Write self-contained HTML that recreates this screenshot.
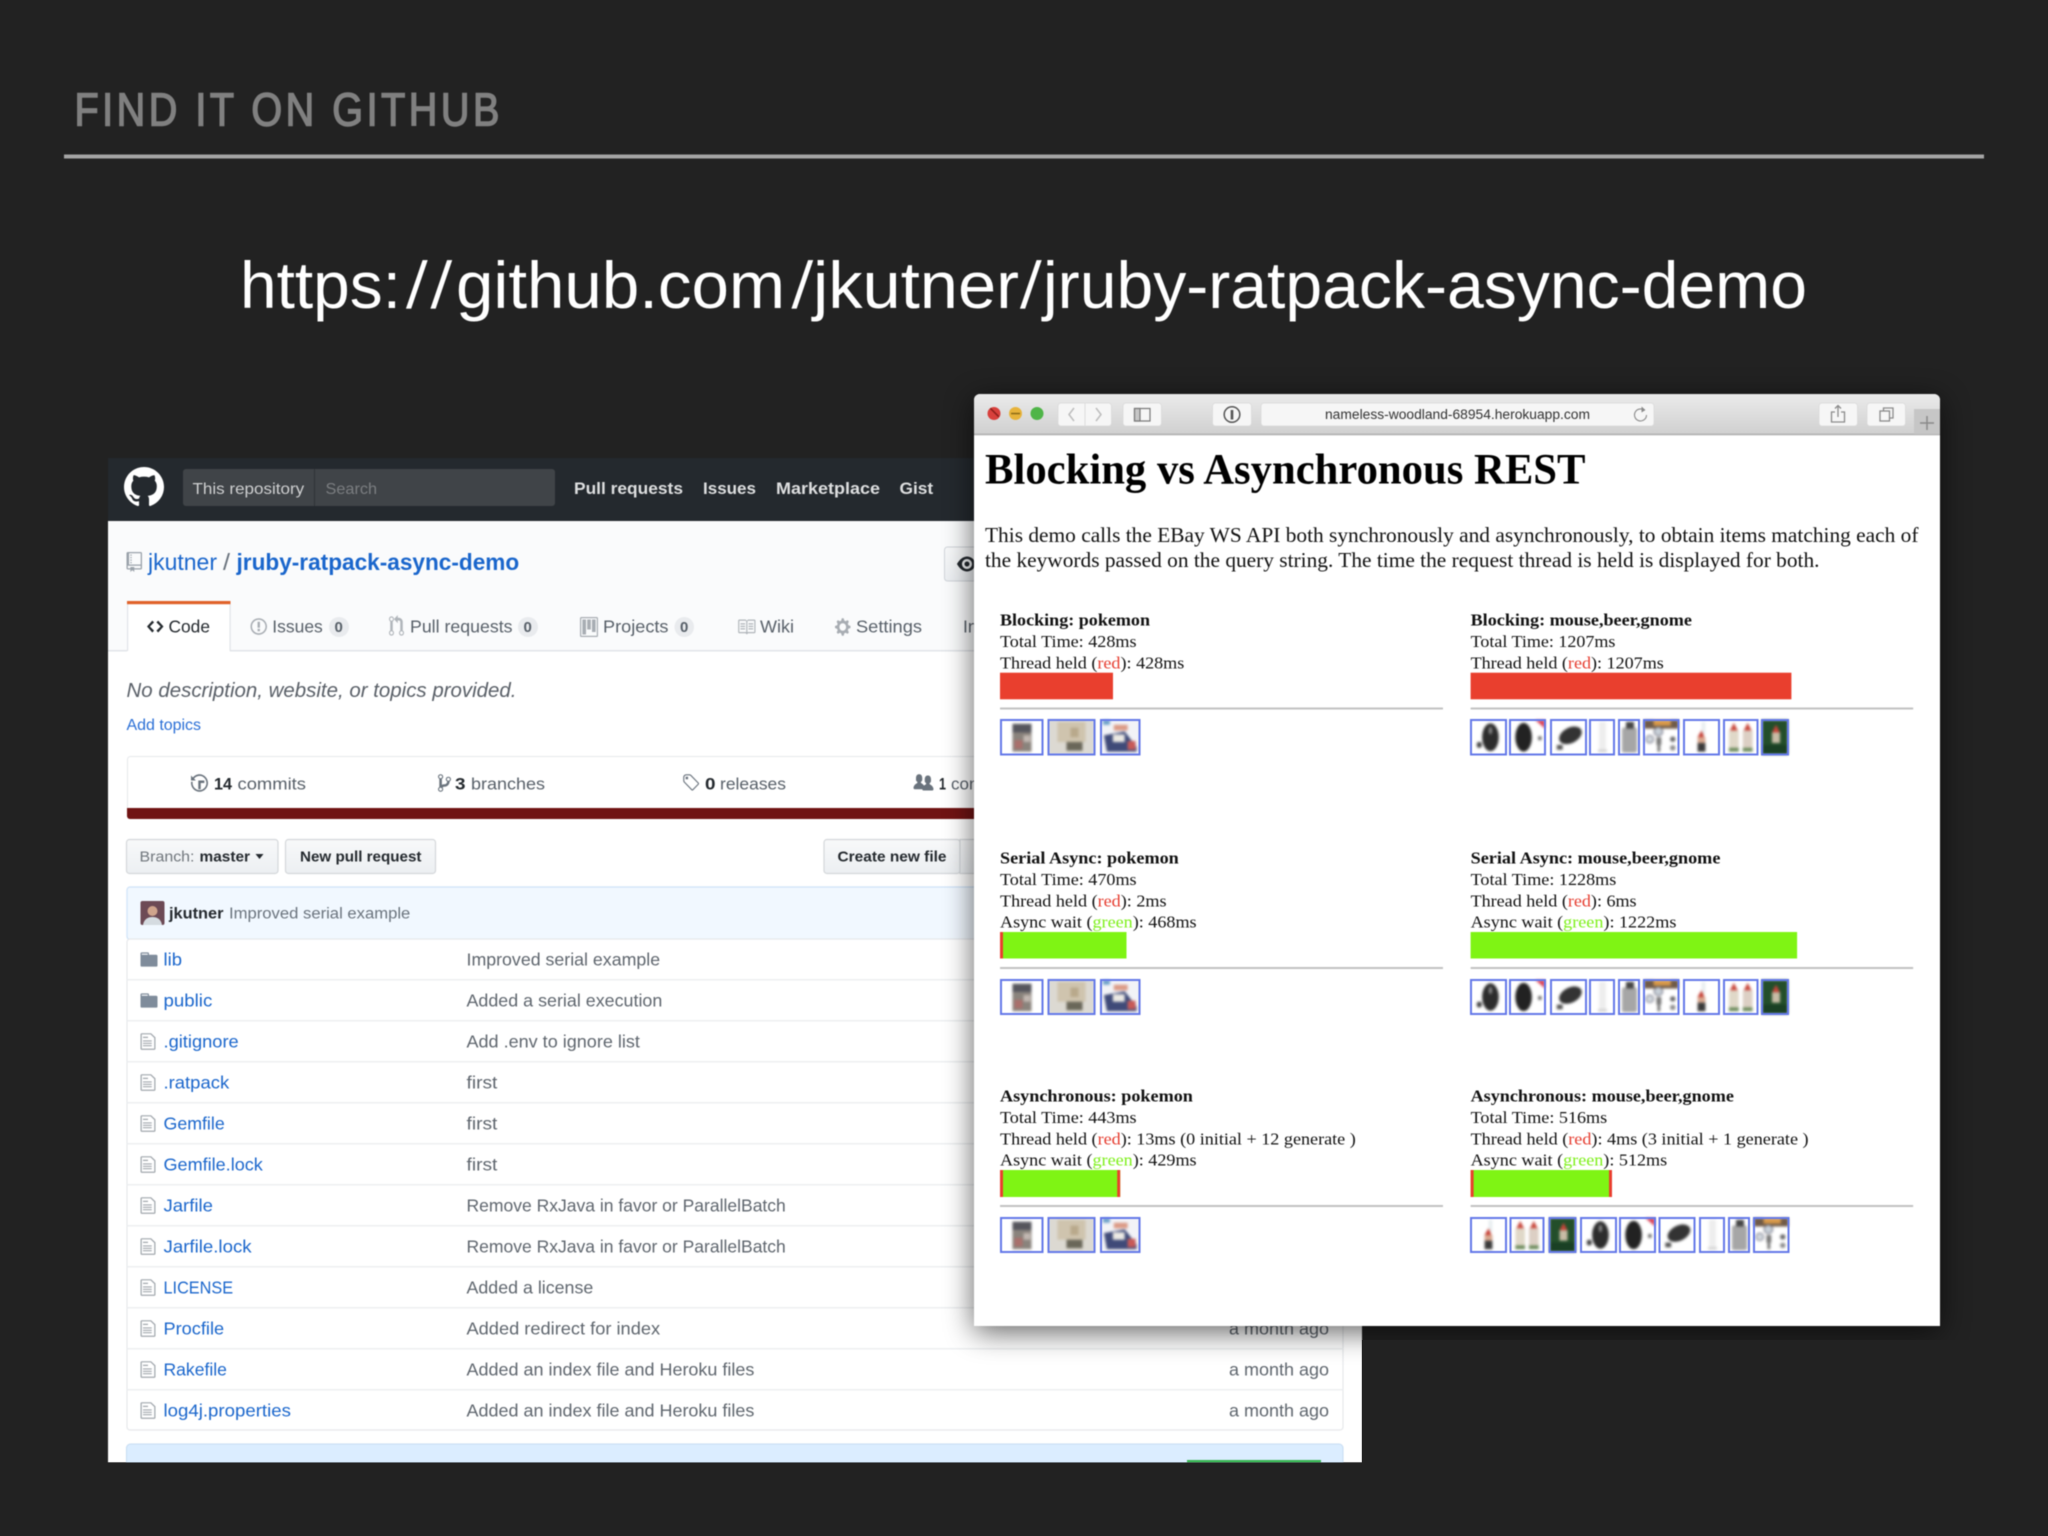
<!DOCTYPE html>
<html lang="en">
<head>
<meta charset="utf-8">
<title>Find it on GitHub</title>
<style>
html,body{margin:0;padding:0;background:#222;width:2048px;height:1536px;overflow:hidden}
svg{display:block}
.s{font-family:"Liberation Sans",sans-serif}
.t{font-family:"Liberation Serif",serif}
.lnk{fill:#1a66cc;font-size:17.5px}
.msg{fill:#5f666e;font-size:17.5px}
.tab{fill:#586069;font-size:17.5px}
.p{fill:#111;font-size:17px}
.b{font-weight:bold;fill:#111;font-size:17px}
</style>
</head>
<body>
<svg xmlns="http://www.w3.org/2000/svg" width="2048" height="1536" viewBox="0 0 2048 1536">
<defs>
<filter id="bl" filterUnits="userSpaceOnUse" x="0" y="0" width="2048" height="1536" color-interpolation-filters="sRGB"><feGaussianBlur stdDeviation="0.65"/></filter>
<filter id="bl2" filterUnits="userSpaceOnUse" x="0" y="0" width="2048" height="1536" color-interpolation-filters="sRGB"><feGaussianBlur stdDeviation="0.4"/></filter>
<filter id="bl3" filterUnits="userSpaceOnUse" x="0" y="0" width="2048" height="1536" color-interpolation-filters="sRGB"><feGaussianBlur stdDeviation="1.2"/></filter>
<filter id="sh" filterUnits="userSpaceOnUse" x="800" y="300" width="1248" height="1236" color-interpolation-filters="sRGB"><feGaussianBlur stdDeviation="15"/></filter>
<linearGradient id="tb" x1="0" y1="0" x2="0" y2="1"><stop offset="0" stop-color="#ebebeb"/><stop offset="1" stop-color="#d0d0d0"/></linearGradient>
<linearGradient id="btn" x1="0" y1="0" x2="0" y2="1"><stop offset="0" stop-color="#f8f9fa"/><stop offset="1" stop-color="#eceff2"/></linearGradient>

<symbol id="logo" viewBox="0 0 16 16" preserveAspectRatio="none"><path fill-rule="evenodd" d="M8 0C3.58 0 0 3.58 0 8c0 3.54 2.29 6.53 5.47 7.59.4.07.55-.17.55-.38 0-.19-.01-.82-.01-1.49-2.01.37-2.53-.49-2.69-.94-.09-.23-.48-.94-.82-1.13-.28-.15-.68-.52-.01-.53.63-.01 1.08.58 1.23.82.72 1.21 1.87.87 2.33.66.07-.52.28-.87.51-1.07-1.78-.2-3.64-.89-3.64-3.95 0-.87.31-1.59.82-2.15-.08-.2-.36-1.02.08-2.12 0 0 .67-.21 2.2.82.64-.18 1.32-.27 2-.27.68 0 1.36.09 2 .27 1.53-1.04 2.2-.82 2.2-.82.44 1.1.16 1.92.08 2.12.51.56.82 1.27.82 2.15 0 3.07-1.87 3.75-3.65 3.95.29.25.54.73.54 1.48 0 1.07-.01 1.93-.01 2.2 0 .21.15.46.55.38A8.013 8.013 0 0 0 16 8c0-4.42-3.58-8-8-8z"/></symbol>
<symbol id="code" viewBox="0 0 14 16" preserveAspectRatio="none"><path d="M9.5 3L8 4.5 11.5 8 8 11.5 9.5 13 14 8 9.5 3zm-5 0L0 8l4.5 5L6 11.5 2.5 8 6 4.5 4.5 3z"/></symbol>
<symbol id="issue" viewBox="0 0 14 16" preserveAspectRatio="none"><path d="M7 2.3c3.14 0 5.7 2.56 5.7 5.7s-2.56 5.7-5.7 5.7A5.71 5.71 0 0 1 1.3 8c0-3.14 2.56-5.7 5.7-5.7zM7 1C3.14 1 0 4.14 0 8s3.14 7 7 7 7-3.14 7-7-3.14-7-7-7zm1 3H6v5h2V4zm0 6H6v2h2v-2z"/></symbol>
<symbol id="pr" viewBox="0 0 12 16" preserveAspectRatio="none"><path d="M11 11.28V5c-.03-.78-.34-1.47-.94-2.06C9.46 2.35 8.78 2.03 8 2H7V0L4 3l3 3V4h1c.27.02.48.11.69.31.21.2.3.42.31.69v6.28A1.993 1.993 0 0 0 10 15a1.993 1.993 0 0 0 1-3.72zm-1 2.92c-.66 0-1.2-.55-1.2-1.2 0-.65.55-1.2 1.2-1.2.65 0 1.2.55 1.2 1.2 0 .65-.55 1.2-1.2 1.2zM4 3c0-1.11-.89-2-2-2a1.993 1.993 0 0 0-1 3.72v6.56A1.993 1.993 0 0 0 2 15a1.993 1.993 0 0 0 1-3.72V4.72c.59-.34 1-.98 1-1.72zm-.8 10c0 .66-.55 1.2-1.2 1.2-.65 0-1.2-.55-1.2-1.2 0-.65.55-1.2 1.2-1.2.65 0 1.2.55 1.2 1.2zM2 4.2C1.34 4.2.8 3.65.8 3c0-.65.55-1.2 1.2-1.2.65 0 1.2.55 1.2 1.2 0 .65-.55 1.2-1.2 1.2z"/></symbol>
<symbol id="proj" viewBox="0 0 15 16" preserveAspectRatio="none"><path fill-rule="evenodd" d="M1 1h13v14H1zM14 0H1a1 1 0 0 0-1 1v14a1 1 0 0 0 1 1h13a1 1 0 0 0 1-1V1a1 1 0 0 0-1-1z"/><path d="M10 12h3V2h-3v10zm-4-2h3V2H6v8zm-4 4h3V2H2v12z"/></symbol>
<symbol id="book" viewBox="0 0 16 16" preserveAspectRatio="none"><path d="M3 5h4v1H3V5zm0 3h4V7H3v1zm0 2h4V9H3v1zm11-5h-4v1h4V5zm0 2h-4v1h4V7zm0 2h-4v1h4V9zm2-6v9c0 .55-.45 1-1 1H9.5l-1 1-1-1H2c-.55 0-1-.45-1-1V3c0-.55.45-1 1-1h5.5l1 1 1-1H15c.55 0 1 .45 1 1zm-8 .5L7.5 3H2v9h6V3.5zm7-.5H9.5l-.5.5V12h6V3z"/></symbol>
<symbol id="gear" viewBox="0 0 14 16" preserveAspectRatio="none"><path d="M14 8.77v-1.6l-1.94-.64-.45-1.09.88-1.84-1.13-1.13-1.81.91-1.09-.45-.69-1.92h-1.6l-.63 1.94-1.11.45-1.84-.88-1.13 1.13.91 1.81-.45 1.09L0 7.23v1.59l1.94.64.45 1.09-.88 1.84 1.13 1.13 1.81-.91 1.09.45.69 1.92h1.59l.63-1.94 1.11-.45 1.84.88 1.13-1.13-.92-1.81.47-1.09L14 8.75v.02zM7 11c-1.66 0-3-1.34-3-3s1.34-3 3-3 3 1.34 3 3-1.34 3-3 3z"/></symbol>
<symbol id="hist" viewBox="0 0 14 16" preserveAspectRatio="none"><path d="M8 13H6V6h5v2H8v5zM7 1C4.81 1 2.87 2.02 1.59 3.59L0 2v4h4L2.5 4.5C3.55 3.17 5.17 2.3 7 2.3c3.14 0 5.7 2.56 5.7 5.7s-2.56 5.7-5.7 5.7A5.71 5.71 0 0 1 1.3 8c0-.34.03-.67.09-1H.08C.03 7.33 0 7.66 0 8c0 3.86 3.14 7 7 7s7-3.14 7-7-3.14-7-7-7z"/></symbol>
<symbol id="branch" viewBox="0 0 10 16" preserveAspectRatio="none"><path d="M10 5c0-1.11-.89-2-2-2a1.993 1.993 0 0 0-1 3.72v.3c-.02.52-.23.98-.63 1.38-.4.4-.86.61-1.38.63-.83.02-1.48.16-2 .45V4.72a1.993 1.993 0 0 0-1-3.72C.88 1 0 1.89 0 3a2 2 0 0 0 1 1.72v6.56c-.59.35-1 .99-1 1.72 0 1.11.89 2 2 2 1.11 0 2-.89 2-2 0-.53-.2-1-.53-1.36.09-.06.48-.41.59-.47.25-.11.56-.17.94-.17 1.05-.05 1.95-.45 2.75-1.25S8.95 7.77 9 6.73h-.02C9.59 6.37 10 5.73 10 5zM2 1.8c.66 0 1.2.55 1.2 1.2 0 .65-.55 1.2-1.2 1.2C1.35 4.2.8 3.65.8 3c0-.65.55-1.2 1.2-1.2zm0 12.41c-.66 0-1.2-.55-1.2-1.2 0-.65.55-1.2 1.2-1.2.65 0 1.2.55 1.2 1.2 0 .65-.55 1.2-1.2 1.2zm6-8c-.66 0-1.2-.55-1.2-1.2 0-.65.55-1.2 1.2-1.2.65 0 1.2.55 1.2 1.2 0 .65-.55 1.2-1.2 1.2z"/></symbol>
<symbol id="tag" viewBox="0 0 14 16" preserveAspectRatio="none"><path d="M7.73 1.73C7.26 1.26 6.62 1 5.96 1H3.5C2.13 1 1 2.13 1 3.5v2.47c0 .66.27 1.3.73 1.77l6.06 6.06c.39.39 1.02.39 1.41 0l4.59-4.59a.996.996 0 0 0 0-1.41L7.73 1.73zM2.38 7.09c-.31-.3-.47-.7-.47-1.13V3.5c0-.88.72-1.59 1.59-1.59h2.47c.42 0 .83.16 1.13.47l6.14 6.13-4.73 4.73-6.13-6.15zM3.01 3h2v2H3V3h.01z"/></symbol>
<symbol id="org" viewBox="0 0 16 16" preserveAspectRatio="none"><path d="M16 12.999c0 .439-.45 1-1 1H7.995c-.539 0-.994-.447-.995-.999H1c-.54 0-1-.561-1-1 0-2.634 3-4 3-4s.229-.409 0-1c-.841-.621-1.058-.59-1-3 .058-2.419 1.367-3 2.5-3s2.442.58 2.5 3c.058 2.41-.159 2.379-1 3-.229.59 0 1 0 1s1.549.711 2.42 2.088C9.196 9.369 10 8.999 10 8.999s.229-.409 0-1c-.841-.62-1.058-.59-1-3 .058-2.419 1.367-3 2.5-3s2.437.581 2.495 3c.059 2.41-.158 2.38-1 3-.229.59 0 1 0 1s3.005 1.366 3.005 4z"/></symbol>
<symbol id="repo" viewBox="0 0 12 16" preserveAspectRatio="none"><path d="M4 9H3V8h1v1zm0-3H3v1h1V6zm0-2H3v1h1V4zm0-2H3v1h1V2zm8-1v12c0 .55-.45 1-1 1H6v2l-1.5-1.5L3 16v-2H1c-.55 0-1-.45-1-1V1c0-.55.45-1 1-1h10c.55 0 1 .45 1 1zm-1 10H1v2h2v-1h3v1h5v-2zm0-10H2v9h9V1z"/></symbol>
<symbol id="file" viewBox="0 0 12 16" preserveAspectRatio="none"><path d="M6 5H2V4h4v1zM2 8h7V7H2v1zm0 2h7V9H2v1zm0 2h7v-1H2v1zm10-7.5V14c0 .55-.45 1-1 1H1c-.55 0-1-.45-1-1V2c0-.55.45-1 1-1h7.5L12 4.5zM11 5L8 2H1v12h10V5z"/></symbol>
<symbol id="folder" viewBox="0 0 14 16" preserveAspectRatio="none"><path d="M13 4H7V3c0-.66-.31-1-1-1H1c-.55 0-1 .45-1 1v10c0 .55.45 1 1 1h12c.55 0 1-.45 1-1V5c0-.55-.45-1-1-1zM6 4H1V3h5v1z"/></symbol>
<symbol id="eye" viewBox="0 0 16 16" preserveAspectRatio="none"><path d="M8.06 2C3 2 0 8 0 8s3 6 8.06 6C13 14 16 8 16 8s-3-6-7.94-6zM8 12c-2.2 0-4-1.78-4-4 0-2.2 1.8-4 4-4 2.22 0 4 1.8 4 4 0 2.22-1.78 4-4 4zm2-4c0 1.11-.89 2-2 2-1.11 0-2-.89-2-2 0-1.11.89-2 2-2 1.11 0 2 .89 2 2z"/></symbol>

<symbol id="m1" viewBox="0 0 36 36" preserveAspectRatio="none"><rect width="36" height="36" fill="#fff"/><rect x="6" y="23" width="5" height="6" rx="2" fill="#444"/><ellipse cx="20" cy="18" rx="8.500" ry="14.500" fill="#2c2c2c"/><ellipse cx="20" cy="11" rx="1.800" ry="4" fill="#888"/></symbol>
<symbol id="m2" viewBox="0 0 36 36" preserveAspectRatio="none"><rect width="36" height="36" fill="#fff"/><ellipse cx="14" cy="18" rx="8.500" ry="15" fill="#222"/><rect x="29" y="17" width="3.500" height="4" fill="#666"/><path d="M26 0L36 0 36 9z" fill="#d9435a"/></symbol>
<symbol id="m3" viewBox="0 0 36 36" preserveAspectRatio="none"><rect width="36" height="36" fill="#fff"/><ellipse cx="20" cy="16" rx="12.500" ry="8" fill="#333" transform="rotate(-28 20 16)"/><rect x="6" y="26" width="6" height="5" fill="#555"/></symbol>
<symbol id="tube" viewBox="0 0 24 36" preserveAspectRatio="none"><rect width="24" height="36" fill="#fff"/><rect x="9" y="2" width="7" height="32" fill="#eeeeee"/><rect x="8" y="31" width="9" height="2" fill="#ccc"/></symbol>
<symbol id="bot" viewBox="0 0 20 36" preserveAspectRatio="none"><rect width="20" height="36" fill="#fff"/><rect x="3" y="8" width="15" height="26" rx="2" fill="#a6a6a6"/><rect x="7" y="2" width="8" height="7" fill="#444"/></symbol>
<symbol id="gauge" viewBox="0 0 36 36" preserveAspectRatio="none"><rect width="36" height="36" fill="#fff"/><rect width="36" height="9" fill="#6f5a48"/><rect x="10" y="0" width="18" height="6" fill="#d99a4a"/><circle cx="15" cy="12" r="4.500" fill="#c8d0d8" stroke="#667" stroke-width="1"/><circle cx="6" cy="20" r="4" fill="#d2d8de" stroke="#778" stroke-width="1"/><rect x="13" y="18" width="5" height="8" fill="#777"/><circle cx="30" cy="20" r="2.800" fill="#666"/><circle cx="30" cy="29" r="2.800" fill="#888"/><rect x="14" y="26" width="3" height="7" fill="#777"/></symbol>
<symbol id="gn1" viewBox="0 0 36 36" preserveAspectRatio="none"><rect width="36" height="36" fill="#fff"/><rect x="18" y="2" width="4" height="13" fill="#e8eef0"/><path d="M14 18l4-7 3 7z" fill="#c43a30"/><rect x="14" y="18" width="8" height="6" fill="#d8a78e"/><rect x="14" y="24" width="8" height="9" fill="#3a3a3a"/></symbol>
<symbol id="gn2" viewBox="0 0 34 36" preserveAspectRatio="none"><rect width="34" height="36" fill="#fff"/><path d="M6 11l4-8 4 8zM20 11l4-8 4 8z" fill="#c8453a"/><rect x="5" y="11" width="10" height="18" fill="#e0d8c8"/><rect x="19" y="11" width="10" height="18" fill="#dccfc4"/><rect x="5" y="29" width="10" height="4" fill="#6b8a5a"/><rect x="19" y="29" width="10" height="4" fill="#6b8a5a"/></symbol>
<symbol id="grn" viewBox="0 0 26 36" preserveAspectRatio="none"><rect width="26" height="36" fill="#234e2a"/><rect x="0" y="26" width="26" height="10" fill="#1a4024"/><path d="M10 13l4-8 4 8z" fill="#c8453a"/><rect x="10" y="13" width="8" height="11" fill="#c8bca6"/></symbol>
<symbol id="pk1" viewBox="0 0 42 36" preserveAspectRatio="none"><rect width="42" height="36" fill="#fff"/><rect x="12" y="4" width="19" height="9" fill="#55555c"/><rect x="12" y="13" width="19" height="20" fill="#8a837c"/><rect x="14" y="21" width="8" height="9" fill="#a9706c"/><rect x="23" y="16" width="7" height="7" fill="#c2b8b2"/></symbol>
<symbol id="pk2" viewBox="0 0 46 36" preserveAspectRatio="none"><rect width="46" height="36" fill="#dcd9d2"/><rect x="9" y="2" width="28" height="21" fill="#cfc4ae"/><rect x="18" y="23" width="16" height="9" fill="#6a6759"/><rect x="22" y="8" width="8" height="10" fill="#b9a98c"/></symbol>
<symbol id="pk3" viewBox="0 0 39 36" preserveAspectRatio="none"><rect width="39" height="36" fill="#f2f3f7"/><rect x="13" y="5" width="14" height="6" fill="#dc9a86"/><rect x="2" y="0" width="7" height="5" fill="#6a9fc8"/><path d="M3 16L24 12 36 28 36 33 6 33z" fill="#3f4a78"/><rect x="12" y="15" width="12" height="8" fill="#eceae4"/><rect x="27" y="22" width="8" height="9" fill="#c85a58"/></symbol>
</defs>

<rect width="2048" height="1536" fill="#222"/>

<!-- slide heading -->
<g filter="url(#bl2)">
<text class="s" transform="translate(74.500 125.500) scale(.86 1)" font-size="46" fill="#808080" stroke="#808080" stroke-width="1.500" textLength="494" lengthAdjust="spacing">FIND IT ON GITHUB</text>
<rect x="64" y="154.500" width="1920" height="4" fill="#a5a5a5"/>
<g class="s" font-size="66" fill="#fff">
<text x="240" y="308" textLength="161" lengthAdjust="spacingAndGlyphs">https:</text>
<text transform="translate(406 308) skewX(-4)">/</text>
<text transform="translate(430.500 308) skewX(-4)">/</text>
<text x="456" y="308" textLength="329" lengthAdjust="spacingAndGlyphs">github.com</text>
<text transform="translate(791.500 308) skewX(-4)">/</text>
<text x="813" y="308" textLength="206" lengthAdjust="spacingAndGlyphs">jkutner</text>
<text transform="translate(1020 308) skewX(-4)">/</text>
<text x="1043" y="308" textLength="764" lengthAdjust="spacingAndGlyphs">jruby-ratpack-async-demo</text>
</g>
</g>

<!-- GitHub window -->
<g filter="url(#bl)">
<rect x="108" y="458" width="1254" height="1004.500" fill="#fff"/>
<rect x="108" y="458" width="1254" height="63" fill="#24292e"/>
<use href="#logo" x="124" y="467" width="40" height="40" fill="#fff"/>
<rect x="183" y="469" width="372" height="37" rx="3" fill="#404448"/>
<rect x="314" y="469" width="1" height="37" fill="#2f3337"/>
<g class="s">
<text x="192.500" y="494" font-size="16" fill="#cfd0d1" textLength="111.700" lengthAdjust="spacingAndGlyphs">This repository</text>
<text x="325.500" y="494" font-size="16" fill="#7b7e81" textLength="51.600" lengthAdjust="spacingAndGlyphs">Search</text>
<g font-size="17" font-weight="bold" fill="#dedfe0">
<text x="574" y="494" textLength="109" lengthAdjust="spacingAndGlyphs">Pull requests</text>
<text x="703" y="494" textLength="53" lengthAdjust="spacingAndGlyphs">Issues</text>
<text x="776" y="494" textLength="104" lengthAdjust="spacingAndGlyphs">Marketplace</text>
<text x="899.500" y="494" textLength="33.700" lengthAdjust="spacingAndGlyphs">Gist</text>
</g>

<!-- repo header -->
<rect x="108" y="521" width="1254" height="129" fill="#fafbfc"/>
<rect x="108" y="650" width="1254" height="1.500" fill="#e1e4e8"/>
<use href="#repo" x="126.500" y="552" width="15.500" height="20" fill="#9aa2aa"/>
<text x="148" y="570" font-size="23" fill="#1a66cc" textLength="69" lengthAdjust="spacingAndGlyphs">jkutner</text>
<text x="223" y="570" font-size="23" fill="#6a737d" textLength="7" lengthAdjust="spacingAndGlyphs">/</text>
<text x="236.500" y="570" font-size="23" font-weight="bold" fill="#1a66cc" textLength="282.700" lengthAdjust="spacingAndGlyphs">jruby-ratpack-async-demo</text>
<rect x="944.500" y="547" width="40" height="34" rx="3" fill="url(#btn)" stroke="#d1d5da"/>
<use href="#eye" x="957" y="554" width="20" height="20" fill="#24292e"/>

<!-- tabs -->
<rect x="127" y="601" width="103" height="51" fill="#fff"/>
<rect x="127" y="604" width="1.200" height="47" fill="#e1e4e8"/>
<rect x="229.500" y="604" width="1.200" height="47" fill="#e1e4e8"/>
<rect x="127" y="601" width="103.500" height="3.200" fill="#e0622a"/>
<use href="#code" x="147" y="617" width="16.500" height="19" fill="#24292e"/>
<text x="168.500" y="632.500" font-size="17.500" fill="#24292e" textLength="41.500" lengthAdjust="spacingAndGlyphs">Code</text>
<use href="#issue" x="250.500" y="617" width="16.500" height="19" fill="#a8adb3"/>
<text class="tab" x="272.300" y="632.500" textLength="50.500" lengthAdjust="spacingAndGlyphs">Issues</text>
<rect x="329" y="617" width="20" height="20" rx="10" fill="#e9ebee"/>
<text x="334.500" y="632" font-size="15" font-weight="bold" fill="#586069">0</text>
<use href="#pr" x="389" y="615" width="15" height="22" fill="#b0b5ba"/>
<text class="tab" x="410" y="632.500" textLength="102.500" lengthAdjust="spacingAndGlyphs">Pull requests</text>
<rect x="518" y="617" width="20" height="20" rx="10" fill="#e9ebee"/>
<text x="523.500" y="632" font-size="15" font-weight="bold" fill="#586069">0</text>
<use href="#proj" x="580" y="617" width="18" height="20" fill="#a8adb3"/>
<text class="tab" x="603" y="632.500" textLength="65.500" lengthAdjust="spacingAndGlyphs">Projects</text>
<rect x="674.500" y="617" width="19.500" height="20" rx="10" fill="#e9ebee"/>
<text x="680" y="632" font-size="15" font-weight="bold" fill="#586069">0</text>
<use href="#book" x="737" y="617" width="18.500" height="20" fill="#b0b5ba"/>
<text class="tab" x="760" y="632.500" textLength="34" lengthAdjust="spacingAndGlyphs">Wiki</text>
<use href="#gear" x="835" y="617" width="15.500" height="20" fill="#a8adb3"/>
<text class="tab" x="856" y="632.500" textLength="66" lengthAdjust="spacingAndGlyphs">Settings</text>
<text class="tab" x="963" y="632.500">In</text>

<!-- description -->
<text x="126.500" y="697" font-size="20" font-style="italic" fill="#5a6068" textLength="390" lengthAdjust="spacingAndGlyphs">No description, website, or topics provided.</text>
<text x="126.500" y="730" font-size="15.500" fill="#2a6fd6" textLength="74.500" lengthAdjust="spacingAndGlyphs">Add topics</text>

<!-- stats -->
<rect x="127.500" y="756.500" width="1210" height="62" rx="3" fill="#fff" stroke="#e6e8eb"/>
<path d="M127 808H1338V816a3 3 0 0 1-3 3H130a3 3 0 0 1-3-3z" fill="#701313"/>
<use href="#hist" x="191" y="773" width="17" height="20" fill="#6a737d"/>
<text x="214" y="789.500" font-size="17" font-weight="bold" fill="#24292e" textLength="18" lengthAdjust="spacingAndGlyphs">14</text>
<text x="237.500" y="789.500" font-size="17" fill="#586069" textLength="68.500" lengthAdjust="spacingAndGlyphs">commits</text>
<use href="#branch" x="438" y="773" width="13" height="20" fill="#6a737d"/>
<text x="455" y="789.500" font-size="17" font-weight="bold" fill="#24292e" textLength="10.500" lengthAdjust="spacingAndGlyphs">3</text>
<text x="471" y="789.500" font-size="17" fill="#586069" textLength="74" lengthAdjust="spacingAndGlyphs">branches</text>
<use href="#tag" x="682" y="773" width="17" height="20" fill="#6a737d"/>
<text x="705" y="789.500" font-size="17" font-weight="bold" fill="#24292e" textLength="10.500" lengthAdjust="spacingAndGlyphs">0</text>
<text x="720" y="789.500" font-size="17" fill="#586069" textLength="66" lengthAdjust="spacingAndGlyphs">releases</text>
<use href="#org" x="913.500" y="773" width="20" height="20" fill="#6a737d"/>
<text x="939" y="789.500" font-size="17" font-weight="bold" fill="#24292e" textLength="7" lengthAdjust="spacingAndGlyphs">1</text>
<text x="951" y="789.500" font-size="17" fill="#586069">contributors</text>

<!-- buttons -->
<rect x="126.500" y="839.500" width="151.500" height="34" rx="3" fill="url(#btn)" stroke="#d4d7da" stroke-width="1.200"/>
<text x="139.500" y="861.500" font-size="15" fill="#70767c" textLength="55" lengthAdjust="spacingAndGlyphs">Branch:</text>
<text x="199.500" y="861.500" font-size="15" font-weight="bold" fill="#24292e" textLength="50.500" lengthAdjust="spacingAndGlyphs">master</text>
<path d="M255.500 854h8l-4 5z" fill="#24292e"/>
<rect x="285.500" y="839.500" width="150" height="34" rx="3" fill="url(#btn)" stroke="#d4d7da" stroke-width="1.200"/>
<text x="300" y="861.500" font-size="15" font-weight="bold" fill="#24292e" textLength="121.500" lengthAdjust="spacingAndGlyphs">New pull request</text>
<rect x="824" y="839.500" width="136" height="34" rx="3" fill="url(#btn)" stroke="#d4d7da" stroke-width="1.200"/>
<text x="837.500" y="861.500" font-size="15" font-weight="bold" fill="#24292e" textLength="109" lengthAdjust="spacingAndGlyphs">Create new file</text>
<rect x="960" y="839.500" width="40" height="34" fill="url(#btn)" stroke="#d4d7da" stroke-width="1.200"/>

<!-- commit bar -->
<rect x="127" y="887" width="1216" height="52.500" rx="3" fill="#f1f8ff" stroke="#cfe3f8" stroke-width="1.200"/>
<rect x="140.500" y="901" width="24" height="24" rx="2" fill="#6d4a55"/>
<circle cx="152.500" cy="911" r="5" fill="#d0a48c"/>
<path d="M143 925c1-6 5-8 9.500-8s8.500 2 9.500 8z" fill="#d5dbe0"/>
<text x="169" y="918.500" font-size="15.500" font-weight="bold" fill="#24292e" textLength="54.500" lengthAdjust="spacingAndGlyphs">jkutner</text>
<text x="229" y="918.500" font-size="15.500" fill="#6a737d" textLength="181.300" lengthAdjust="spacingAndGlyphs">Improved serial example</text>

<!-- file table -->
<rect x="127" y="939" width="1216" height="491" rx="3" fill="#fff" stroke="#e6e8eb" stroke-width="1.200"/>
<g fill="#edeff1">
<rect x="127" y="979" width="1216" height="1.500"/><rect x="127" y="1020" width="1216" height="1.500"/><rect x="127" y="1061" width="1216" height="1.500"/><rect x="127" y="1102" width="1216" height="1.500"/><rect x="127" y="1143" width="1216" height="1.500"/><rect x="127" y="1184" width="1216" height="1.500"/><rect x="127" y="1225" width="1216" height="1.500"/><rect x="127" y="1266" width="1216" height="1.500"/><rect x="127" y="1307" width="1216" height="1.500"/><rect x="127" y="1348" width="1216" height="1.500"/><rect x="127" y="1389" width="1216" height="1.500"/>
</g>
<use href="#folder" x="140.500" y="950" width="17" height="19" fill="#7f8c9b"/>
<use href="#folder" x="140.500" y="991" width="17" height="19" fill="#7f8c9b"/>
<g fill="#a2a8ae">
<use href="#file" x="140.500" y="1032" width="15" height="19"/>
<use href="#file" x="140.500" y="1073" width="15" height="19"/>
<use href="#file" x="140.500" y="1114" width="15" height="19"/>
<use href="#file" x="140.500" y="1155" width="15" height="19"/>
<use href="#file" x="140.500" y="1196" width="15" height="19"/>
<use href="#file" x="140.500" y="1237" width="15" height="19"/>
<use href="#file" x="140.500" y="1278" width="15" height="19"/>
<use href="#file" x="140.500" y="1319" width="15" height="19"/>
<use href="#file" x="140.500" y="1360" width="15" height="19"/>
<use href="#file" x="140.500" y="1401" width="15" height="19"/>
</g>
<text class="lnk" x="163.500" y="965.500" textLength="18.500" lengthAdjust="spacingAndGlyphs">lib</text>
<text class="lnk" x="163.500" y="1006.500" textLength="48.800" lengthAdjust="spacingAndGlyphs">public</text>
<text class="lnk" x="163.500" y="1047.500" textLength="75.200" lengthAdjust="spacingAndGlyphs">.gitignore</text>
<text class="lnk" x="163.500" y="1088.500" textLength="65.700" lengthAdjust="spacingAndGlyphs">.ratpack</text>
<text class="lnk" x="163.500" y="1129.500" textLength="61.200" lengthAdjust="spacingAndGlyphs">Gemfile</text>
<text class="lnk" x="163.500" y="1170.500" textLength="99.300" lengthAdjust="spacingAndGlyphs">Gemfile.lock</text>
<text class="lnk" x="163.500" y="1211.500" textLength="49.400" lengthAdjust="spacingAndGlyphs">Jarfile</text>
<text class="lnk" x="163.500" y="1252.500" textLength="88.100" lengthAdjust="spacingAndGlyphs">Jarfile.lock</text>
<text class="lnk" x="163.500" y="1293.500" textLength="69.600" lengthAdjust="spacingAndGlyphs">LICENSE</text>
<text class="lnk" x="163.500" y="1334.500" textLength="60.600" lengthAdjust="spacingAndGlyphs">Procfile</text>
<text class="lnk" x="163.500" y="1375.500" textLength="63.400" lengthAdjust="spacingAndGlyphs">Rakefile</text>
<text class="lnk" x="163.500" y="1416.500" textLength="127.400" lengthAdjust="spacingAndGlyphs">log4j.properties</text>

<text class="msg" x="466.500" y="965.500" textLength="193.600" lengthAdjust="spacingAndGlyphs">Improved serial example</text>
<text class="msg" x="466.500" y="1006.500" textLength="195.800" lengthAdjust="spacingAndGlyphs">Added a serial execution</text>
<text class="msg" x="466.500" y="1047.500" textLength="173.400" lengthAdjust="spacingAndGlyphs">Add .env to ignore list</text>
<text class="msg" x="466.500" y="1088.500" textLength="30.900" lengthAdjust="spacingAndGlyphs">first</text>
<text class="msg" x="466.500" y="1129.500" textLength="30.900" lengthAdjust="spacingAndGlyphs">first</text>
<text class="msg" x="466.500" y="1170.500" textLength="30.900" lengthAdjust="spacingAndGlyphs">first</text>
<text class="msg" x="466.500" y="1211.500" textLength="319.300" lengthAdjust="spacingAndGlyphs">Remove RxJava in favor or ParallelBatch</text>
<text class="msg" x="466.500" y="1252.500" textLength="319.300" lengthAdjust="spacingAndGlyphs">Remove RxJava in favor or ParallelBatch</text>
<text class="msg" x="466.500" y="1293.500" textLength="126.800" lengthAdjust="spacingAndGlyphs">Added a license</text>
<text class="msg" x="466.500" y="1334.500" textLength="193.600" lengthAdjust="spacingAndGlyphs">Added redirect for index</text>
<text class="msg" x="466.500" y="1375.500" textLength="287.900" lengthAdjust="spacingAndGlyphs">Added an index file and Heroku files</text>
<text class="msg" x="466.500" y="1416.500" textLength="287.900" lengthAdjust="spacingAndGlyphs">Added an index file and Heroku files</text>
<text class="msg" x="1229" y="1334.500" textLength="100" lengthAdjust="spacingAndGlyphs">a month ago</text>
<text class="msg" x="1229" y="1375.500" textLength="100" lengthAdjust="spacingAndGlyphs">a month ago</text>
<text class="msg" x="1229" y="1416.500" textLength="100" lengthAdjust="spacingAndGlyphs">a month ago</text>

<!-- readme bar -->
<path d="M126.500 1462.500V1448a4 4 0 0 1 4-4H1339a4 4 0 0 1 4 4v14.500z" fill="#dbedff" stroke="#c6dcf2" stroke-width="1"/>
<rect x="1187" y="1460" width="134" height="2.500" fill="#35b24f"/>
</g>
</g>

<!-- browser shadow -->
<rect x="974" y="400" width="966" height="932" fill="#000" opacity="0.62" filter="url(#sh)"/>
<rect x="0" y="1462.500" width="2048" height="74" fill="#222"/>
<rect x="1362" y="1340" width="686" height="196" fill="#222"/>

<!-- browser window -->
<g filter="url(#bl)">
<path d="M974 400a6 6 0 0 1 6-6H1934a6 6 0 0 1 6 6V1326H974z" fill="#fff"/>
<path d="M974 400a6 6 0 0 1 6-6H1934a6 6 0 0 1 6 6V434H974z" fill="url(#tb)"/>
<rect x="974" y="433.500" width="966" height="1.800" fill="#b4b4b4"/>
<circle cx="994" cy="413.500" r="6.500" fill="#d8403c"/>
<circle cx="1015.500" cy="413.500" r="6.500" fill="#e7b33a"/>
<circle cx="1037" cy="413.500" r="6.500" fill="#4fb548"/>
<rect x="988" y="411.500" width="12" height="1.500" fill="#8a1e1a" transform="rotate(45 994 413)"/>
<rect x="1011" y="412.800" width="9" height="1.500" fill="#8c6a15"/>
<g fill="#f6f6f6" stroke="#d9d9d9" stroke-width="0.800">
<rect x="1058" y="403" width="53.500" height="23" rx="3"/>
<rect x="1123" y="403" width="38.500" height="23" rx="3"/>
<rect x="1212.500" y="403" width="39" height="23" rx="3"/>
<rect x="1261" y="403" width="393" height="23" rx="3"/>
<rect x="1819" y="403" width="38.500" height="23" rx="3"/>
<rect x="1867" y="403" width="38.500" height="23" rx="3"/>
</g>
<rect x="1084.500" y="403" width="1" height="23" fill="#dcdcdc"/>
<path d="M1074 408l-5 6.500 5 6.500M1096 408l5 6.500-5 6.500" fill="none" stroke="#bdbdbd" stroke-width="1.500"/>
<rect x="1134.500" y="408.500" width="15.500" height="12.500" fill="none" stroke="#777" stroke-width="1.200"/>
<rect x="1134.500" y="408.500" width="5.500" height="12.500" fill="#c6c6c6" stroke="#777" stroke-width="1.200"/>
<circle cx="1232" cy="414.500" r="7.800" fill="none" stroke="#555" stroke-width="1.500"/>
<rect x="1230.700" y="410" width="2.600" height="9.500" fill="#555"/>
<text class="s" x="1325" y="419" font-size="13.500" fill="#333" textLength="265" lengthAdjust="spacingAndGlyphs">nameless-woodland-68954.herokuapp.com</text>
<path d="M1644.500 410.500a6 6 0 1 0 2 4.500" fill="none" stroke="#8a8a8a" stroke-width="1.100"/>
<path d="M1641.500 406.500l4 3.500-4 2.500z" fill="#8a8a8a"/>
<path d="M1835 412h-3.500v10h13v-10H1841M1838 417v-11.500M1835 408.500l3-3 3 3" fill="none" stroke="#8a8a8a" stroke-width="1.300"/>
<rect x="1880" y="411" width="9.500" height="10" fill="none" stroke="#8a8a8a" stroke-width="1.300"/>
<path d="M1883.500 411v-3h9.500v10h-3.500" fill="none" stroke="#8a8a8a" stroke-width="1.300"/>
<rect x="1914" y="409" width="26" height="25" fill="#c6c6c6"/>
<path d="M1927 416v14M1920 423h14" stroke="#8a8a8a" stroke-width="1.500"/>

<g class="t">
<text x="985" y="483.500" font-size="43" font-weight="bold" fill="#000" textLength="600.500" lengthAdjust="spacingAndGlyphs">Blocking vs Asynchronous REST</text>
<text x="985" y="542" font-size="21" fill="#111" textLength="933.500" lengthAdjust="spacingAndGlyphs">This demo calls the EBay WS API both synchronously and asynchronously, to obtain items matching each of</text>
<text x="985" y="567" font-size="21" fill="#111" textLength="834.500" lengthAdjust="spacingAndGlyphs">the keywords passed on the query string. The time the request thread is held is displayed for both.</text>

<!-- Blocking -->
<text class="b" x="1000" y="625.700" textLength="150" lengthAdjust="spacingAndGlyphs">Blocking: pokemon</text>
<text class="p" x="1000" y="647" textLength="136.500" lengthAdjust="spacingAndGlyphs">Total Time: 428ms</text>
<text class="p" x="1000" y="668.300" textLength="184.300" lengthAdjust="spacingAndGlyphs">Thread held (<tspan fill="#e63d30">red</tspan>): 428ms</text>
<rect x="1000" y="672.700" width="113" height="26.600" fill="#e93f2e"/>
<rect x="1000" y="707.500" width="443" height="2" fill="#c2c2c2"/>
<text class="b" x="1470.600" y="625.700" textLength="221.300" lengthAdjust="spacingAndGlyphs">Blocking: mouse,beer,gnome</text>
<text class="p" x="1470.600" y="647" textLength="144.800" lengthAdjust="spacingAndGlyphs">Total Time: 1207ms</text>
<text class="p" x="1470.600" y="668.300" textLength="193.200" lengthAdjust="spacingAndGlyphs">Thread held (<tspan fill="#e63d30">red</tspan>): 1207ms</text>
<rect x="1470.600" y="672.700" width="320.800" height="26.600" fill="#e93f2e"/>
<rect x="1470.600" y="707.500" width="442.600" height="2" fill="#c2c2c2"/>

<!-- Serial -->
<text class="b" x="1000" y="863.500" textLength="178.800" lengthAdjust="spacingAndGlyphs">Serial Async: pokemon</text>
<text class="p" x="1000" y="885" textLength="136.600" lengthAdjust="spacingAndGlyphs">Total Time: 470ms</text>
<text class="p" x="1000" y="906.300" textLength="166.600" lengthAdjust="spacingAndGlyphs">Thread held (<tspan fill="#e63d30">red</tspan>): 2ms</text>
<text class="p" x="1000" y="927.700" textLength="196.600" lengthAdjust="spacingAndGlyphs">Async wait (<tspan fill="#7ef01a">green</tspan>): 468ms</text>
<rect x="1000" y="932" width="126.500" height="26.500" fill="#7ff414"/>
<rect x="1000" y="932" width="3" height="26.500" fill="#e93f2e"/>
<rect x="1000" y="967" width="443" height="2" fill="#c2c2c2"/>
<text class="b" x="1470.600" y="863.500" textLength="249.800" lengthAdjust="spacingAndGlyphs">Serial Async: mouse,beer,gnome</text>
<text class="p" x="1470.600" y="885" textLength="145.700" lengthAdjust="spacingAndGlyphs">Total Time: 1228ms</text>
<text class="p" x="1470.600" y="906.300" textLength="166" lengthAdjust="spacingAndGlyphs">Thread held (<tspan fill="#e63d30">red</tspan>): 6ms</text>
<text class="p" x="1470.600" y="927.700" textLength="205.800" lengthAdjust="spacingAndGlyphs">Async wait (<tspan fill="#7ef01a">green</tspan>): 1222ms</text>
<rect x="1470.600" y="932" width="326.500" height="26.500" fill="#7ff414"/>
<rect x="1470.600" y="967" width="442.600" height="2" fill="#c2c2c2"/>

<!-- Async -->
<text class="b" x="1000" y="1101.500" textLength="192.900" lengthAdjust="spacingAndGlyphs">Asynchronous: pokemon</text>
<text class="p" x="1000" y="1123" textLength="136.600" lengthAdjust="spacingAndGlyphs">Total Time: 443ms</text>
<text class="p" x="1000" y="1144.300" textLength="355.800" lengthAdjust="spacingAndGlyphs">Thread held (<tspan fill="#e63d30">red</tspan>): 13ms (0 initial + 12 generate )</text>
<text class="p" x="1000" y="1165.700" textLength="196.600" lengthAdjust="spacingAndGlyphs">Async wait (<tspan fill="#7ef01a">green</tspan>): 429ms</text>
<rect x="1000" y="1170" width="120.200" height="27" fill="#7ff414"/>
<rect x="1000" y="1170" width="3" height="27" fill="#e93f2e"/>
<rect x="1117.200" y="1170" width="3" height="27" fill="#e93f2e"/>
<rect x="1000" y="1205" width="443" height="2" fill="#c2c2c2"/>
<text class="b" x="1470.600" y="1101.500" textLength="263.300" lengthAdjust="spacingAndGlyphs">Asynchronous: mouse,beer,gnome</text>
<text class="p" x="1470.600" y="1123" textLength="136.600" lengthAdjust="spacingAndGlyphs">Total Time: 516ms</text>
<text class="p" x="1470.600" y="1144.300" textLength="338" lengthAdjust="spacingAndGlyphs">Thread held (<tspan fill="#e63d30">red</tspan>): 4ms (3 initial + 1 generate )</text>
<text class="p" x="1470.600" y="1165.700" textLength="196.600" lengthAdjust="spacingAndGlyphs">Async wait (<tspan fill="#7ef01a">green</tspan>): 512ms</text>
<rect x="1470.600" y="1170" width="141.400" height="27" fill="#7ff414"/>
<rect x="1470.600" y="1170" width="3" height="27" fill="#e93f2e"/>
<rect x="1609" y="1170" width="3" height="27" fill="#e93f2e"/>
<rect x="1470.600" y="1205" width="442.600" height="2" fill="#c2c2c2"/>
</g>

<!-- thumbnails -->
<g filter="url(#bl3)">
<use href="#pk1" x="1000.500" y="720" width="42" height="34.500"/>
<use href="#pk2" x="1048.500" y="720" width="46" height="34.500"/>
<use href="#pk3" x="1101" y="720" width="38.500" height="34.500"/>
<use href="#pk1" x="1000.500" y="980" width="42" height="34"/>
<use href="#pk2" x="1048.500" y="980" width="46" height="34"/>
<use href="#pk3" x="1101" y="980" width="38.500" height="34"/>
<use href="#pk1" x="1000.500" y="1218" width="42" height="34"/>
<use href="#pk2" x="1048.500" y="1218" width="46" height="34"/>
<use href="#pk3" x="1101" y="1218" width="38.500" height="34"/>
<use href="#m1" x="1471" y="720" width="35" height="34.500"/><use href="#m2" x="1510" y="720" width="35" height="34.500"/><use href="#m3" x="1551" y="720" width="35" height="34.500"/><use href="#tube" x="1590" y="720" width="24" height="34.500"/><use href="#bot" x="1619" y="720" width="20" height="34.500"/><use href="#gauge" x="1644" y="720" width="34.500" height="34.500"/><use href="#gn1" x="1684" y="720" width="35" height="34.500"/><use href="#gn2" x="1724" y="720" width="33.500" height="34.500"/><use href="#grn" x="1762" y="720" width="26" height="34.500"/>
<use href="#m1" x="1471" y="980" width="35" height="34"/><use href="#m2" x="1510" y="980" width="35" height="34"/><use href="#m3" x="1551" y="980" width="35" height="34"/><use href="#tube" x="1590" y="980" width="24" height="34"/><use href="#bot" x="1619" y="980" width="20" height="34"/><use href="#gauge" x="1644" y="980" width="34.500" height="34"/><use href="#gn1" x="1684" y="980" width="35" height="34"/><use href="#gn2" x="1724" y="980" width="33.500" height="34"/><use href="#grn" x="1762" y="980" width="26" height="34"/>
<use href="#gn1" x="1471" y="1218" width="35" height="34"/><use href="#gn2" x="1510.500" y="1218" width="33" height="34"/><use href="#grn" x="1549.500" y="1218" width="26" height="34"/><use href="#m1" x="1581" y="1218" width="35" height="34"/><use href="#m2" x="1620" y="1218" width="35" height="34"/><use href="#m3" x="1659.500" y="1218" width="35" height="34"/><use href="#tube" x="1700" y="1218" width="24" height="34"/><use href="#bot" x="1729" y="1218" width="20" height="34"/><use href="#gauge" x="1754" y="1218" width="34.500" height="34"/>
</g>
<g fill="none" stroke="#6378e8" stroke-width="2">
<rect x="1001" y="720" width="41.500" height="34.500"/><rect x="1048.500" y="720" width="46" height="34.500"/><rect x="1101" y="720" width="38.500" height="34.500"/>
<rect x="1001" y="980" width="41.500" height="34"/><rect x="1048.500" y="980" width="46" height="34"/><rect x="1101" y="980" width="38.500" height="34"/>
<rect x="1001" y="1218" width="41.500" height="34"/><rect x="1048.500" y="1218" width="46" height="34"/><rect x="1101" y="1218" width="38.500" height="34"/>
<rect x="1471" y="720" width="35" height="34.500"/><rect x="1510" y="720" width="35" height="34.500"/><rect x="1551" y="720" width="35" height="34.500"/><rect x="1590" y="720" width="24" height="34.500"/><rect x="1619" y="720" width="20" height="34.500"/><rect x="1644" y="720" width="34.500" height="34.500"/><rect x="1684" y="720" width="35" height="34.500"/><rect x="1724" y="720" width="33.500" height="34.500"/><rect x="1762" y="720" width="26" height="34.500"/>
<rect x="1471" y="980" width="35" height="34"/><rect x="1510" y="980" width="35" height="34"/><rect x="1551" y="980" width="35" height="34"/><rect x="1590" y="980" width="24" height="34"/><rect x="1619" y="980" width="20" height="34"/><rect x="1644" y="980" width="34.500" height="34"/><rect x="1684" y="980" width="35" height="34"/><rect x="1724" y="980" width="33.500" height="34"/><rect x="1762" y="980" width="26" height="34"/>
<rect x="1471" y="1218" width="35" height="34"/><rect x="1510.500" y="1218" width="33" height="34"/><rect x="1549.500" y="1218" width="26" height="34"/><rect x="1581" y="1218" width="35" height="34"/><rect x="1620" y="1218" width="35" height="34"/><rect x="1659.500" y="1218" width="35" height="34"/><rect x="1700" y="1218" width="24" height="34"/><rect x="1729" y="1218" width="20" height="34"/><rect x="1754" y="1218" width="34.500" height="34"/>
</g>
</g>
</svg>
</body>
</html>
